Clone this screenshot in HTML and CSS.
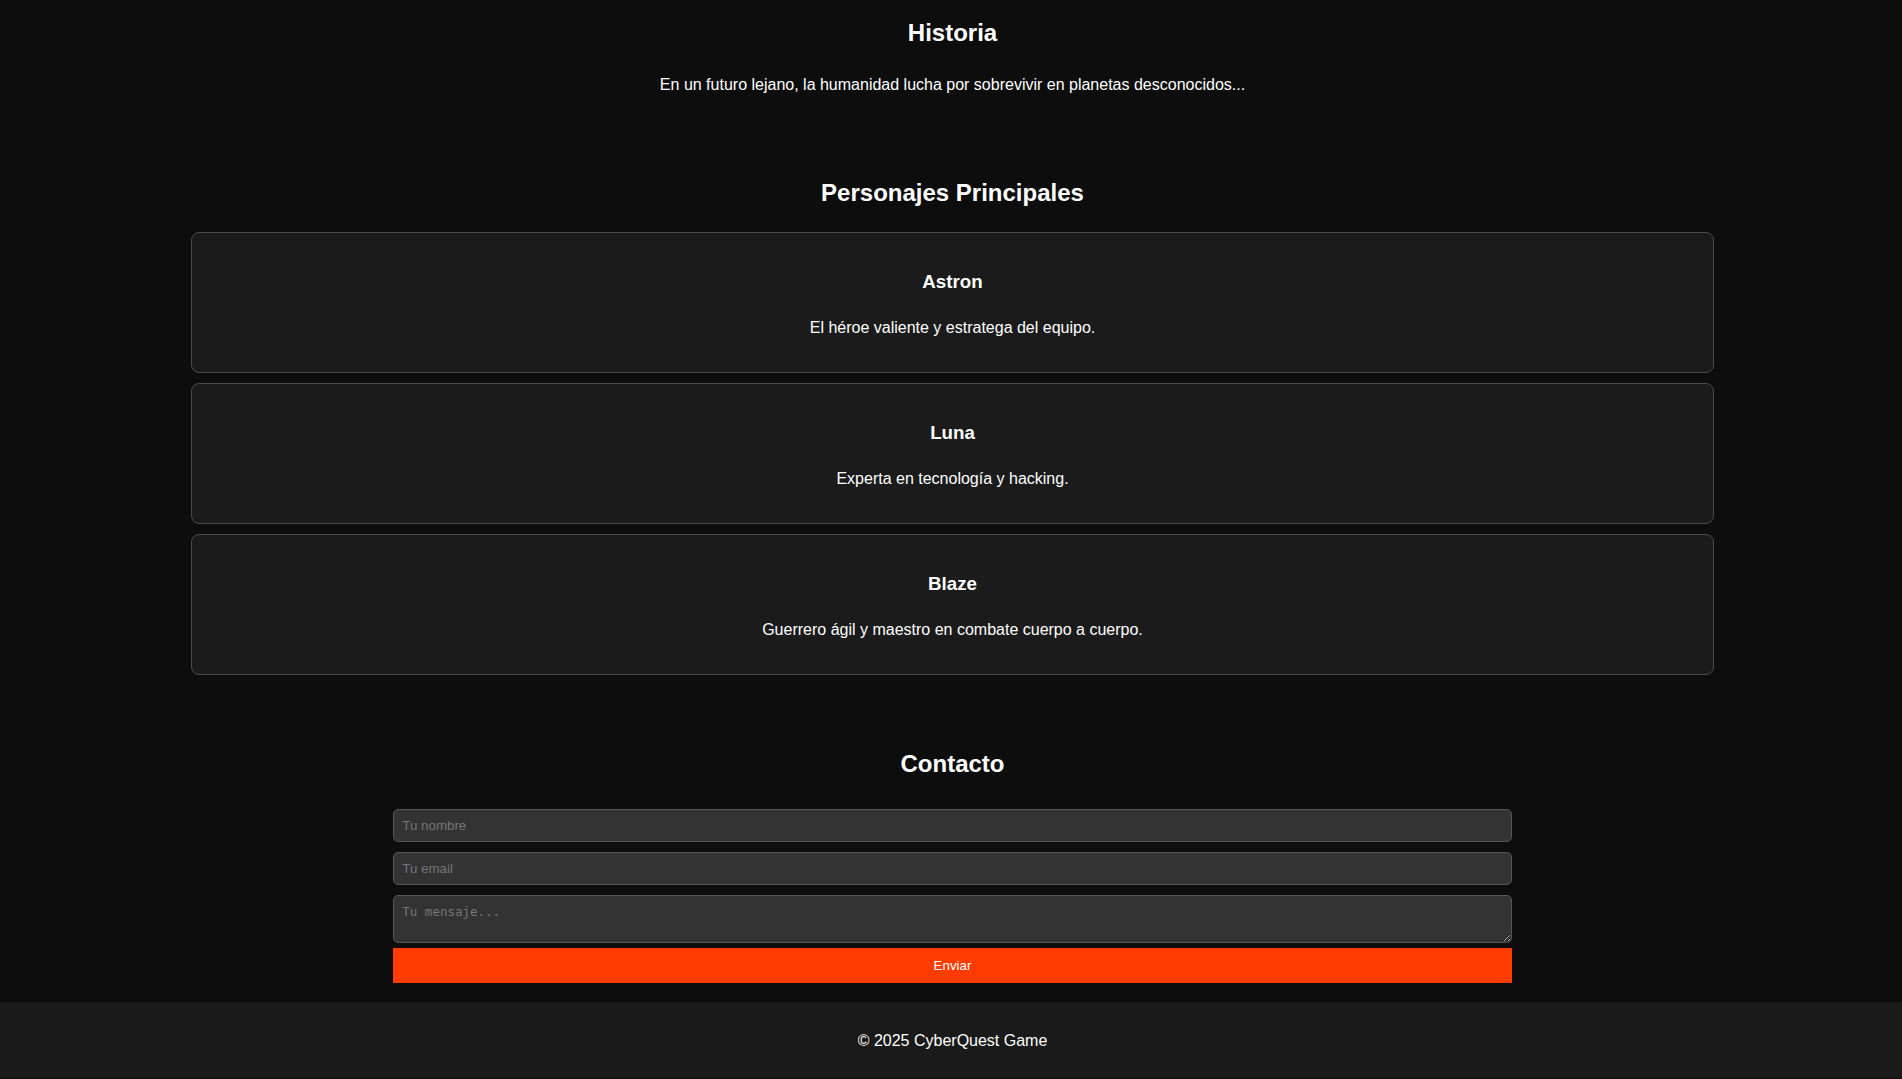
FILE: index.html
```html
<!DOCTYPE html>
<html lang="es">
<head>
<meta charset="utf-8">
<title>CyberQuest Game</title>
<link rel="stylesheet" href="styles.css">
</head>
<body>
<main>
  <section class="section section--first">
    <h2 class="section-title">Historia</h2>
    <p class="text">En un futuro lejano, la humanidad lucha por sobrevivir en planetas desconocidos...</p>
  </section>
  <section class="section">
    <h2 class="section-title">Personajes Principales</h2>
    <div class="card">
      <h3 class="card-title">Astron</h3>
      <p class="text">El héroe valiente y estratega del equipo.</p>
    </div>
    <div class="card">
      <h3 class="card-title">Luna</h3>
      <p class="text">Experta en tecnología y hacking.</p>
    </div>
    <div class="card">
      <h3 class="card-title">Blaze</h3>
      <p class="text">Guerrero ágil y maestro en combate cuerpo a cuerpo.</p>
    </div>
  </section>
  <section class="section section--contact">
    <h2 class="section-title">Contacto</h2>
    <form class="contact-form">
      <input class="field" type="text" placeholder="Tu nombre">
      <input class="field" type="email" placeholder="Tu email">
      <textarea class="field field--area" rows="2" placeholder="Tu mensaje..."></textarea>
      <button class="submit" type="button">Enviar</button>
    </form>
  </section>
</main>
<footer class="footer">
  <p class="footer-text">© 2025 CyberQuest Game</p>
</footer>
</body>
</html>
```
FILE: styles.css
```css
html, body {
  margin: 0;
  padding: 0;
}
body {
  background: #0d0d0d;
  color: #ffffff;
  font-family: "Liberation Sans", Arial, sans-serif;
  line-height: 1.6;
  text-align: center;
  overflow: hidden;
  padding-left: 3px;
}
.section {
  padding: 20px;
}
.section--first {
  padding-top: 0;
}
.section--first .section-title {
  margin-top: 14px;
}
.section--contact {
  padding-bottom: 19px;
}
.section-title {
  font-size: 24px;
  font-weight: bold;
  margin: 19.92px 0;
}
.text {
  font-size: 16px;
  margin: 16px 0;
}
.card {
  width: 80%;
  margin: 10px auto;
  padding: 15px 17px;
  background: #1b1b1b;
  border: 1px solid #4a4a4a;
  border-radius: 8px;
}
.card-title {
  font-size: 18.72px;
  font-weight: bold;
  margin: 18.72px 0;
}
.contact-form {
  width: 60%;
  margin: 0 auto;
  padding-top: 1px;
  display: flex;
  flex-direction: column;
}
.field {
  box-sizing: border-box;
  width: calc(100% + 3px);
  margin: 5px -1.5px;
  height: 33px;
  padding: 8px;
  background: #333333;
  border: 1px solid #555555;
  border-radius: 5px;
  color: #ffffff;
  font-family: "Liberation Sans", Arial, sans-serif;
  font-size: 13.33px;
  line-height: 15px;
}
.field::placeholder {
  color: #757575;
}
.field--area {
  height: 48px;
  font-family: "DejaVu Sans Mono", "Liberation Mono", monospace;
  font-size: 12.5px;
  line-height: 15px;
  resize: vertical;
}
.submit {
  width: calc(100% + 3px);
  margin: 0 -1.5px;
  padding: 10px;
  border: none;
  background: #ff3c00;
  color: #ffffff;
  font-family: "Liberation Sans", Arial, sans-serif;
  font-size: 13.33px;
  line-height: 15px;
}
.footer {
  background: #1a1a1a;
  padding: 10px 0 8px;
  margin-left: -3px;
}
.footer-text {
  margin: 16px 0;
  font-size: 16px;
  padding-left: 3px;
}
```
